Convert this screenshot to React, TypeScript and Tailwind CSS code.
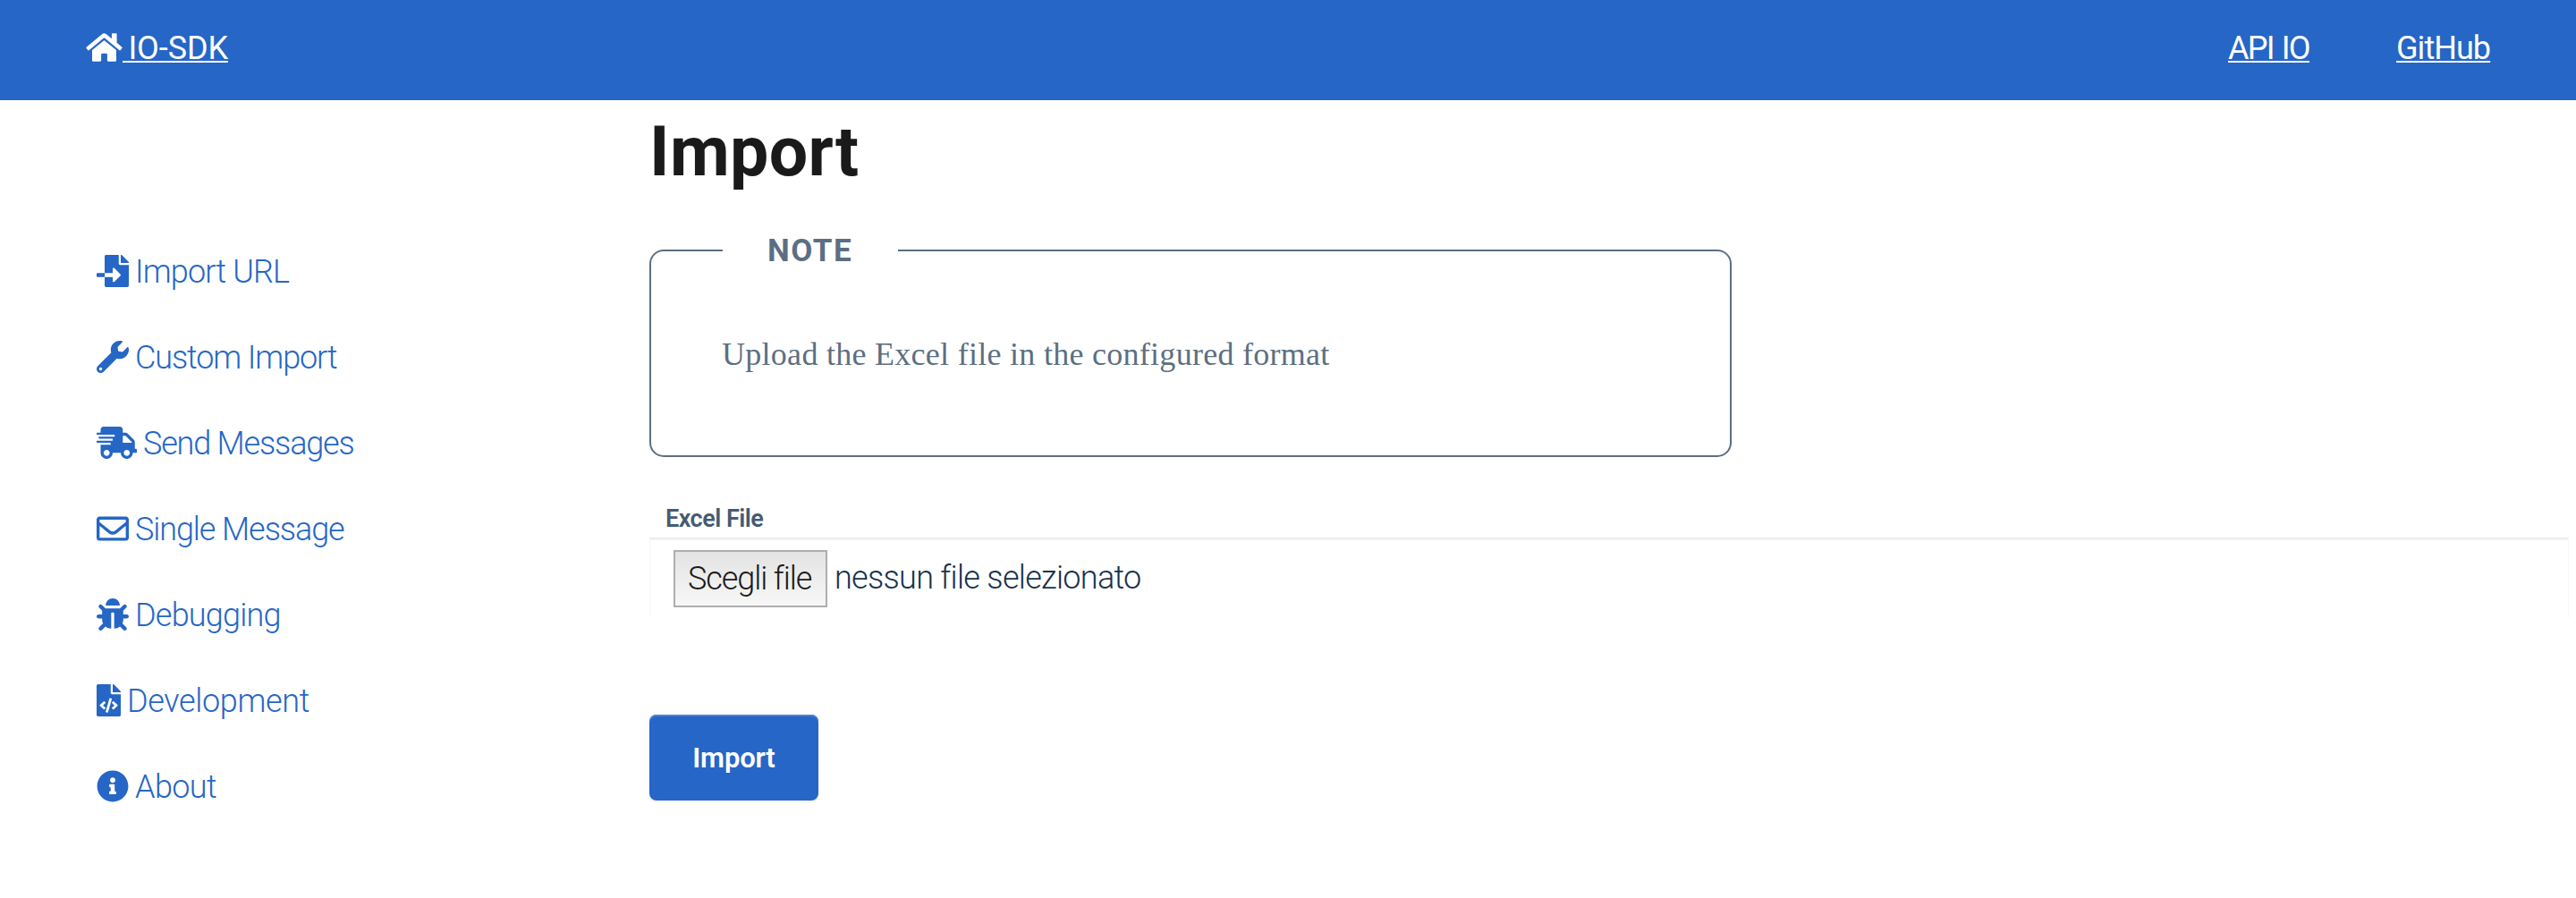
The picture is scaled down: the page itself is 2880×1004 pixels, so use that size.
import type { IconType } from 'react-icons';
import { FaHome, FaFileImport, FaWrench, FaShippingFast, FaRegEnvelope, FaBug, FaFileCode, FaInfoCircle } from 'react-icons/fa';

type Item = { label: string; Icon: IconType; size: string; tracking: string };

const items: Item[] = [
  { label: 'Import URL', Icon: FaFileImport, size: 'w-9', tracking: 'tracking-[-0.84px]' },
  { label: 'Custom Import', Icon: FaWrench, size: 'w-9', tracking: 'tracking-[-1.1px]' },
  { label: 'Send Messages', Icon: FaShippingFast, size: 'w-[45px]', tracking: 'tracking-[-1.18px]' },
  { label: 'Single Message', Icon: FaRegEnvelope, size: 'w-9', tracking: 'tracking-[-1.09px]' },
  { label: 'Debugging', Icon: FaBug, size: 'w-9', tracking: 'tracking-[-0.78px]' },
  { label: 'Development', Icon: FaFileCode, size: 'w-[27px]', tracking: 'tracking-[-0.36px]' },
  { label: 'About', Icon: FaInfoCircle, size: 'w-9', tracking: 'tracking-[-0.61px]' },
];

function Header() {
  return (
    <header className="flex h-28 items-center justify-between bg-[#2566c6] pr-24 pb-1 pl-24 text-[36px] leading-[48px] text-white">
      <a href="#" className="flex items-center">
        <FaHome className="mb-[3px] h-9 w-[41px]" />
        <span className="whitespace-pre tracking-[-0.1px] underline decoration-2 underline-offset-[2px] [word-spacing:-2.4px] [text-decoration-skip-ink:none]"> IO-SDK</span>
      </a>
      <nav className="flex gap-24 underline decoration-2 underline-offset-[2px] [text-decoration-skip-ink:none]">
        <a href="#" className="w-[92px] whitespace-nowrap tracking-[-1.7px] [word-spacing:1.6px]">API IO</a>
        <a href="#" className="w-[105px] tracking-[-0.95px]">GitHub</a>
      </nav>
    </header>
  );
}

function Sidebar() {
  return (
    <nav className="w-[726px] shrink-0 pt-36 pl-[108px]">
      {items.map(({ label, Icon, size, tracking }) => (
        <a key={label} href="#" className="flex h-24 items-center gap-[7px] text-[36px] font-[350] text-[#2566c6]">
          <Icon className={`mb-[3px] h-9 ${size}`} />
          <span className={tracking}>{label}</span>
        </a>
      ))}
    </nav>
  );
}

export default function App() {
  return (
    <div className="min-h-[1004px] bg-white font-['Roboto',sans-serif]">
      <Header />
      <div className="flex">
        <Sidebar />
        <main className="w-[2146px]">
          <h1 className="text-[77px] leading-[116px] font-bold tracking-[0.39px] text-[#1a1a1a]">Import</h1>
          <fieldset className="mt-8 h-[251px] w-[1210px] rounded-2xl border-2 border-[#5c6f82] px-20 text-[#5c6f82]">
            <legend className="w-[196px] pr-[46px] pl-[50px] text-[35px] leading-[40px] font-bold tracking-[1.54px]">
              <span className="block translate-y-px">NOTE</span>
            </legend>
            <p className="mt-[71px] -ml-px font-['Liberation_Serif',serif] text-[36px] leading-[50px] tracking-[0.28px]">
              Upload the Excel file in the configured format
            </p>
          </fieldset>
          <label className="mt-[49px] block pl-[18px] text-[27px] leading-[40px] font-semibold tracking-[-0.5px] text-[#455b71]">
            Excel File
          </label>
          <div className="mt-px flex h-[90px] items-start gap-2 border-x border-t-2 border-x-[#f8f8f8] border-t-[#ebebeb] pt-3 pl-[26px] text-[36px] font-[350] shadow-[inset_0_1px_0_#f9f9f9]">
            <button className="flex h-16 w-[172px] items-center border-2 border-[#aeaeae] bg-linear-to-b from-[#e3e3e3] to-[#f7f7f7] pl-[14px] whitespace-nowrap tracking-[-1.09px] text-[#1a1a1a]">
              Scegli file
            </button>
            <span className="leading-[62px] tracking-[-0.7px] text-[#17324d]">nessun file selezionato</span>
          </div>
          <button className="mt-[108px] flex h-24 w-[189px] items-center justify-center rounded-lg bg-[#2566c6] pt-[3px] text-[31px] font-semibold tracking-[-0.15px] text-white shadow-[inset_0_2px_0_#4a80cf,0_2px_2px_rgba(0,0,0,0.06)]">
            Import
          </button>
        </main>
      </div>
    </div>
  );
}
